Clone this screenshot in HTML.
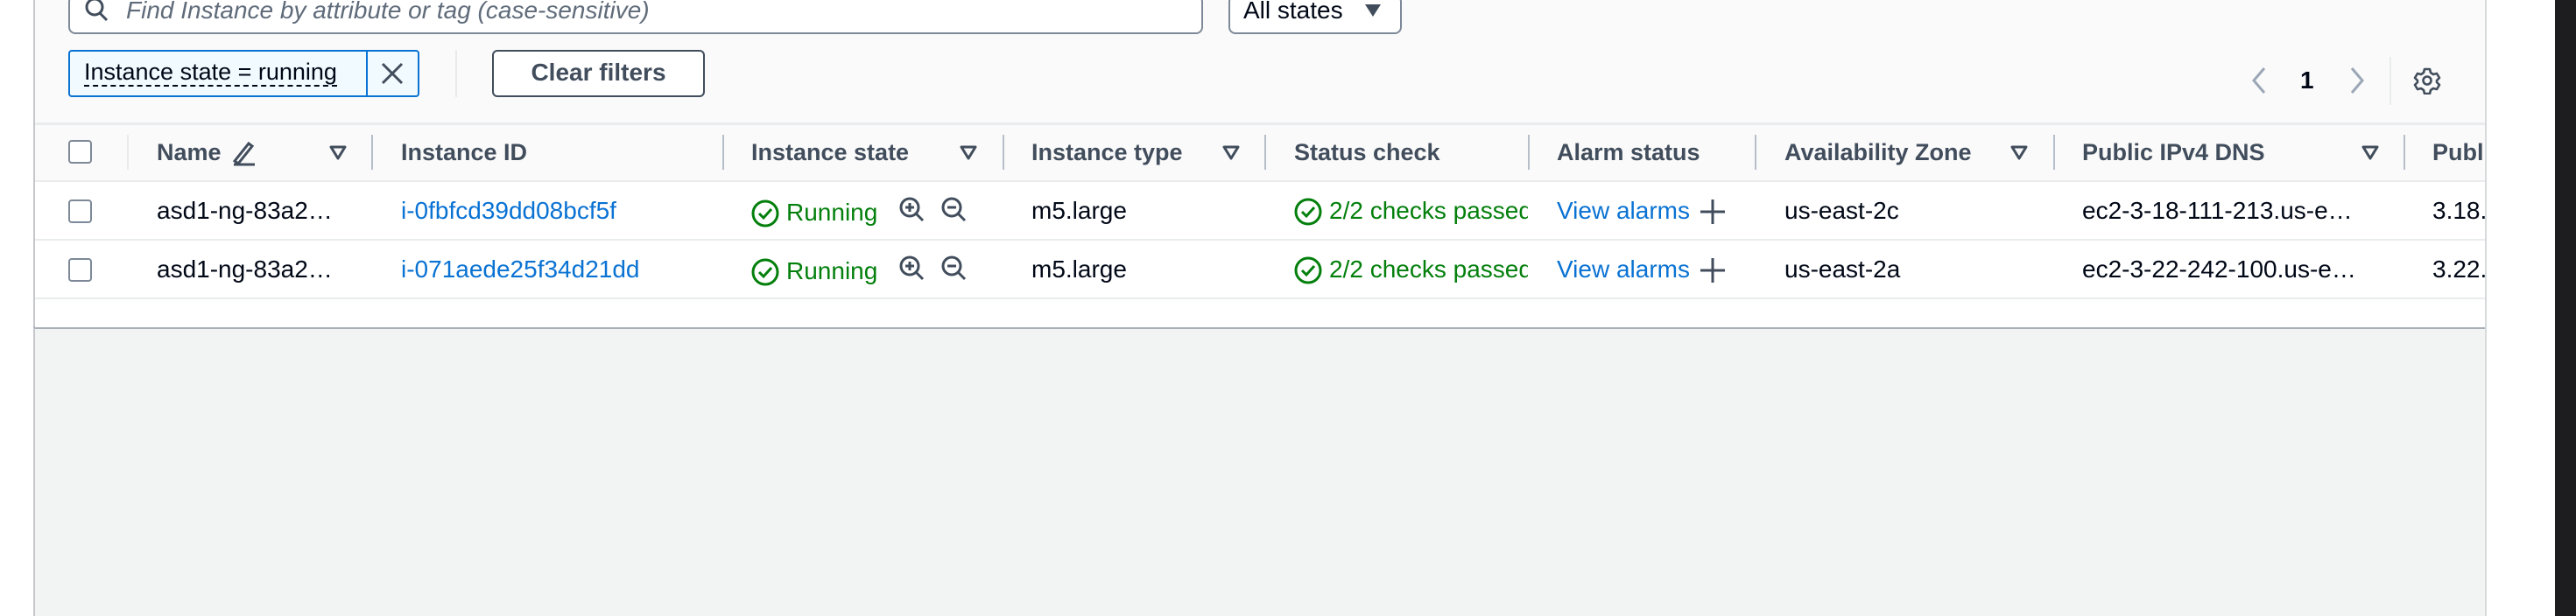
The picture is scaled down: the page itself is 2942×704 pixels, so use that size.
<!DOCTYPE html>
<html><head><meta charset="utf-8"><style>
*{margin:0;padding:0;box-sizing:border-box}
body{width:2942px;height:704px;overflow:hidden;background:#fff;font-family:"Liberation Sans",sans-serif;position:relative;color:#000716}
.a{position:absolute;white-space:nowrap}
.h{font-weight:bold;color:#414d5c;font-size:27px;top:159px;line-height:30px}
.t{font-size:28px;line-height:32px}
.sep{position:absolute;width:2px;background:#b6bec9;top:154px;height:40px}
.cb{position:absolute;width:27px;height:27px;border:2px solid #7d8998;border-radius:4px;background:#fff;left:78px}
.fi{position:absolute;top:166px}
.link{color:#0972d3}
.grn{color:#037f0c}
</style></head><body>
<div class="a" style="left:38px;top:0;width:2800px;height:373px;background:#fafafa;border-left:2px solid #c6c6cd"></div>
<div class="a" style="left:38px;top:373px;width:2800px;height:331px;background:#f2f3f3;border-left:2px solid #c6c6cd;border-top:3px solid #a9b0b8"></div>
<div class="a" style="left:2838px;top:0;width:2px;height:704px;background:#d5dbdb"></div>
<div class="a" style="left:2918px;top:0;width:24px;height:704px;background:#1d1d20"></div>
<!-- search -->
<div class="a" style="left:78px;top:-6px;width:1296px;height:45px;border:2px solid #7d8998;border-radius:8px;background:#fff"></div>
<svg class="a" style="left:96px;top:-2px" width="30" height="30" viewBox="0 0 30 30"><circle cx="12" cy="10" r="9" fill="none" stroke="#414d5c" stroke-width="3"/><path d="M18 17l8 8" stroke="#414d5c" stroke-width="3"/></svg>
<div class="a t" style="left:144px;top:-4px;font-style:italic;color:#5f6b7a">Find Instance by attribute or tag (case-sensitive)</div>
<div class="a" style="left:1403px;top:-6px;width:198px;height:45px;border:2px solid #7d8998;border-radius:8px;background:#fff"></div>
<div class="a t" style="left:1420px;top:-4px">All states</div>
<svg class="a" style="left:1558px;top:4px" width="20" height="16"><path d="M1 1h18l-9 14z" fill="#414d5c"/></svg>
<!-- token -->
<div class="a" style="left:78px;top:57px;width:401px;height:54px;border:2px solid #0972d3;border-radius:4px;background:#f1faff"></div>
<div class="a" style="left:418px;top:57px;width:2px;height:54px;background:#0972d3"></div>
<div class="a t" style="left:96px;top:67px;border-bottom:2px dashed #000716;line-height:30px;font-size:27px">Instance state = running</div>
<svg class="a" style="left:434px;top:70px" width="28" height="28"><path d="M3 3l22 22M25 3L3 25" stroke="#414d5c" stroke-width="3"/></svg>
<div class="a" style="left:520px;top:57px;width:2px;height:54px;background:#e9ebed"></div>
<div class="a" style="left:562px;top:57px;width:243px;height:54px;border:2px solid #414d5c;border-radius:6px;background:#fff"></div>
<div class="a t" style="left:562px;top:67px;width:243px;text-align:center;font-weight:bold;color:#414d5c">Clear filters</div>
<!-- pagination -->
<svg class="a" style="left:2570px;top:76px" width="20" height="32"><path d="M16 2L4 16l12 14" fill="none" stroke="#9ba7b6" stroke-width="3"/></svg>
<div class="a t" style="left:2627px;top:76px;font-weight:bold">1</div>
<svg class="a" style="left:2682px;top:76px" width="20" height="32"><path d="M4 2l12 14L4 30" fill="none" stroke="#9ba7b6" stroke-width="3"/></svg>
<div class="a" style="left:2729px;top:65px;width:2px;height:55px;background:#e9ebed"></div>
<svg class="a" style="left:2756px;top:76px" width="32" height="32" viewBox="0 0 32 32"><path d="M13 3h6l1 4 3 2 4-1 3 5-3 3v2l3 3-3 5-4-1-3 2-1 4h-6l-1-4-3-2-4 1-3-5 3-3v-2l-3-3 3-5 4 1 3-2z" fill="none" stroke="#414d5c" stroke-width="2.6" stroke-linejoin="round"/><circle cx="16" cy="16" r="4.5" fill="none" stroke="#414d5c" stroke-width="2.6"/></svg>
<!-- table -->
<div class="a" style="left:40px;top:140px;width:2798px;height:3px;background:#e9ebed"></div>
<div class="a" style="left:40px;top:206px;width:2798px;height:168px;background:#fff"></div>
<div class="a" style="left:40px;top:206px;width:2798px;height:2px;background:#e9ebed"></div>
<div class="a" style="left:40px;top:273px;width:2798px;height:2px;background:#e9ebed"></div>
<div class="a" style="left:40px;top:340px;width:2798px;height:2px;background:#e9ebed"></div>
<div class="cb" style="top:160px"></div><div class="cb" style="top:228px"></div><div class="cb" style="top:295px"></div>
<div class="sep" style="left:145px;background:#e9ebed"></div>
<div class="a h" style="left:179px">Name</div>
<svg class="a" style="left:264px;top:160px" width="32" height="30"><path d="M4 24l16-20 4 3-16 20zM3 28h24" fill="none" stroke="#414d5c" stroke-width="3"/></svg>
<svg class="fi" style="left:376px" width="20" height="18"><path d="M2 2h16l-8 13z" fill="none" stroke="#414d5c" stroke-width="3" stroke-linejoin="round"/></svg>
<div class="sep" style="left:424px"></div>
<div class="a h" style="left:458px">Instance ID</div>
<div class="sep" style="left:825px"></div>
<div class="a h" style="left:858px">Instance state</div>
<svg class="fi" style="left:1096px" width="20" height="18"><path d="M2 2h16l-8 13z" fill="none" stroke="#414d5c" stroke-width="3" stroke-linejoin="round"/></svg>
<div class="sep" style="left:1145px"></div>
<div class="a h" style="left:1178px">Instance type</div>
<svg class="fi" style="left:1396px" width="20" height="18"><path d="M2 2h16l-8 13z" fill="none" stroke="#414d5c" stroke-width="3" stroke-linejoin="round"/></svg>
<div class="sep" style="left:1444px"></div>
<div class="a h" style="left:1478px">Status check</div>
<div class="sep" style="left:1745px"></div>
<div class="a h" style="left:1778px">Alarm status</div>
<div class="sep" style="left:2004px"></div>
<div class="a h" style="left:2038px">Availability Zone</div>
<svg class="fi" style="left:2296px" width="20" height="18"><path d="M2 2h16l-8 13z" fill="none" stroke="#414d5c" stroke-width="3" stroke-linejoin="round"/></svg>
<div class="sep" style="left:2345px"></div>
<div class="a h" style="left:2378px">Public IPv4 DNS</div>
<svg class="fi" style="left:2697px" width="20" height="18"><path d="M2 2h16l-8 13z" fill="none" stroke="#414d5c" stroke-width="3" stroke-linejoin="round"/></svg>
<div class="sep" style="left:2745px"></div>
<div class="a h" style="left:2778px;width:60px;overflow:hidden">Public IPv4</div>

<!-- rows -->
<div class="a t" style="left:179px;top:225px">asd1-ng-83a2…</div>
<div class="a t link" style="left:458px;top:225px">i-0fbfcd39dd08bcf5f</div>
<div class="a t" style="left:179px;top:292px">asd1-ng-83a2…</div>
<div class="a t link" style="left:458px;top:292px">i-071aede25f34d21dd</div>

<svg class="a" style="left:857px;top:227px" width="34" height="34"><circle cx="17" cy="17" r="14" fill="none" stroke="#037f0c" stroke-width="3"/><path d="M10 17l5 5 9-10" fill="none" stroke="#037f0c" stroke-width="3"/></svg>
<div class="a t grn" style="left:898px;top:227px">Running</div>
<svg class="a" style="left:857px;top:294px" width="34" height="34"><circle cx="17" cy="17" r="14" fill="none" stroke="#037f0c" stroke-width="3"/><path d="M10 17l5 5 9-10" fill="none" stroke="#037f0c" stroke-width="3"/></svg>
<div class="a t grn" style="left:898px;top:294px">Running</div>
<svg class="a" style="left:1026px;top:224px" width="32" height="32"><circle cx="13" cy="13" r="10" fill="none" stroke="#414d5c" stroke-width="3"/><path d="M20 20l8 8M8 13h10M13 8v10" stroke="#414d5c" stroke-width="3"/></svg>
<svg class="a" style="left:1074px;top:224px" width="32" height="32"><circle cx="13" cy="13" r="10" fill="none" stroke="#414d5c" stroke-width="3"/><path d="M20 20l8 8M8 13h10" stroke="#414d5c" stroke-width="3"/></svg>
<svg class="a" style="left:1026px;top:291px" width="32" height="32"><circle cx="13" cy="13" r="10" fill="none" stroke="#414d5c" stroke-width="3"/><path d="M20 20l8 8M8 13h10M13 8v10" stroke="#414d5c" stroke-width="3"/></svg>
<svg class="a" style="left:1074px;top:291px" width="32" height="32"><circle cx="13" cy="13" r="10" fill="none" stroke="#414d5c" stroke-width="3"/><path d="M20 20l8 8M8 13h10" stroke="#414d5c" stroke-width="3"/></svg>

<div class="a t" style="left:1178px;top:225px">m5.large</div>
<div class="a t" style="left:1178px;top:292px">m5.large</div>

<svg class="a" style="left:1477px;top:225px" width="34" height="34"><circle cx="17" cy="17" r="14" fill="none" stroke="#037f0c" stroke-width="3"/><path d="M10 17l5 5 9-10" fill="none" stroke="#037f0c" stroke-width="3"/></svg>
<div class="a t grn" style="left:1518px;top:225px;width:227px;overflow:hidden">2/2 checks passed</div>
<svg class="a" style="left:1477px;top:292px" width="34" height="34"><circle cx="17" cy="17" r="14" fill="none" stroke="#037f0c" stroke-width="3"/><path d="M10 17l5 5 9-10" fill="none" stroke="#037f0c" stroke-width="3"/></svg>
<div class="a t grn" style="left:1518px;top:292px;width:227px;overflow:hidden">2/2 checks passed</div>

<div class="a t link" style="left:1778px;top:225px">View alarms</div>
<svg class="a" style="left:1940px;top:226px" width="32" height="32"><path d="M16 2v28M2 16h28" stroke="#414d5c" stroke-width="3"/></svg>
<div class="a t link" style="left:1778px;top:292px">View alarms</div>
<svg class="a" style="left:1940px;top:293px" width="32" height="32"><path d="M16 2v28M2 16h28" stroke="#414d5c" stroke-width="3"/></svg>

<div class="a t" style="left:2038px;top:225px">us-east-2c</div>
<div class="a t" style="left:2038px;top:292px">us-east-2a</div>
<div class="a t" style="left:2378px;top:225px">ec2-3-18-111-213.us-e…</div>
<div class="a t" style="left:2378px;top:292px">ec2-3-22-242-100.us-e…</div>
<div class="a t" style="left:2778px;top:225px;width:60px;overflow:hidden">3.18.111</div>
<div class="a t" style="left:2778px;top:292px;width:60px;overflow:hidden">3.22.242</div>
</body></html>
